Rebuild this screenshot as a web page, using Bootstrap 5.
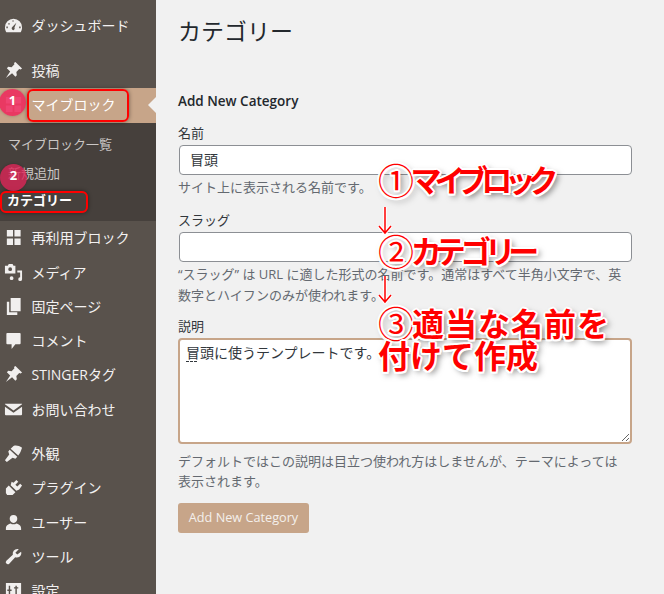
<!DOCTYPE html>
<html lang="ja">
<head>
<meta charset="utf-8">
<title>カテゴリー</title>
<link href="https://cdn.jsdelivr.net/npm/bootstrap@5.3.0/dist/css/bootstrap.min.css" rel="stylesheet">
<style>
html,body{height:594px;overflow:hidden}
body{background:#f1f1f1;font-family:"Open Sans","Noto Sans CJK JP",sans-serif;font-size:13px;color:#32373c;position:relative}
.side{width:156px;height:594px;background:#59524c;flex:none;overflow:hidden;padding-top:8px}
.mi{height:34.3px;display:flex;align-items:center;color:#f3f1f1;font-size:14px;text-decoration:none;padding-left:4px;position:relative}
.mi svg{width:19px;height:19px;margin-right:8.500px;flex:none;fill:#f1efee}
.mi span{white-space:nowrap}
.gap{height:11px}
.gap2{height:10px}
.mi.act{background:#c7a589;height:35px;color:#fff;padding-bottom:2px}
.mi.act:after{content:"";position:absolute;right:0;top:9px;border:8px solid transparent;border-right-color:#f1f1f1}
.sub{background:#46403c;height:98px;padding-top:9.500px}
.sub a{display:block;height:28.500px;line-height:25px;padding-left:8px;font-size:13px;color:#cbc7c5;text-decoration:none;white-space:nowrap}
.sub a.on{color:#fff;font-weight:700;padding-left:7px;height:22px;line-height:22px}
.main{padding:0 0 0 22px;width:476px;flex:none}
.ttl{font-size:23px;font-weight:400;color:#23282d;margin:17px 0 0;line-height:29px;height:29px}
.sec{font-size:13.500px;font-weight:600;margin:46px 0 0;line-height:18px;height:18px;color:#23282d}
.lbl{display:block;line-height:18px;margin:15px 0 3px 0;font-size:13px;color:#32373c}
.fc{margin-left:1px;width:453px;height:30px;border:1px solid #8c8f94;border-radius:4px;padding:0 10px 2px;font-size:14px;color:#32373c;box-shadow:none;background:#fff;min-height:0}
.hint{color:#646970;font-size:13px;line-height:21px;margin:0;width:454px}
.h1t{margin-top:2px}
.ta{margin-left:0;width:454px;height:106px;border:2px solid #c7a589;border-radius:4px;padding:3px 6px;font-size:14px;line-height:19px;color:#32373c;box-shadow:none;min-height:0}
.ta:focus{border-color:#c7a589;box-shadow:none}
.addb{background:#c7a589;border:0;color:#f4f0ec;font-size:12.700px;font-weight:400;height:30px;width:131px;padding:0;border-radius:3px;margin-top:12px}
.addb:hover{background:#c7a589;color:#f4f0ec}
.ov{position:absolute;pointer-events:none}
.rbox{border:2px solid #f00;border-radius:6px;box-shadow:0 0 4px rgba(0,0,0,.45)}
.num{width:27px;height:27px;border-radius:50%;color:#fff;font-size:13px;font-weight:700;display:flex;align-items:center;justify-content:center;padding-bottom:3px;box-shadow:0 0 3px rgba(0,0,0,.25)}
.n1{left:-1px;top:89px;background:rgba(238,38,92,.85)}
.n2{left:0;top:164px;background:rgba(220,36,86,.8)}
.anno{color:#f00;font-size:32px;font-weight:700;line-height:38px;white-space:nowrap;font-family:"Noto Sans CJK JP",sans-serif;
text-shadow:-2px 0 0 #fff,2px 0 0 #fff,0 -2px 0 #fff,0 2px 0 #fff,-1.5px -1.5px 0 #fff,1.5px 1.5px 0 #fff,-1.5px 1.5px 0 #fff,1.5px -1.5px 0 #fff,3px 3px 6px rgba(0,0,0,.6)}
.a1{font-feature-settings:"palt";font-size:31px;letter-spacing:-5.300px}
.a2{font-feature-settings:"palt";font-size:31px;letter-spacing:-4.500px}
.a3{letter-spacing:1px}
.circ{letter-spacing:0;font-size:36px;font-weight:400;font-feature-settings:normal;display:inline-block;width:34px;margin-right:0;text-align:center;vertical-align:top;line-height:38px}
.dots{left:186px;top:361px;width:11px;border-top:1px dashed #32373c}
</style>
</head>
<body>
<div class="d-flex">
<nav class="side">
<a class="mi" href="#"><svg viewBox="0 0 20 20"><path d="M10 3a9 9 0 0 0-9 9c0 2 .6 3.500 1.500 5h15c.9-1.500 1.500-3 1.500-5a9 9 0 0 0-9-9zM4 13H2.500v-2H4zm2-4H4.500V7.500H6zm4-3H9V4.500h1zm0 9a2 2 0 0 1-1-3.700L13 7l-2 5.200A2 2 0 0 1 10 15zm4-6h1.500V7.500H14zm3.500 4H16v-2h1.500z"/></svg><span>ダッシュボード</span></a>
<div class="gap"></div>
<a class="mi" href="#"><svg viewBox="0 0 20 20"><path d="M12 1l7 7-1.500 1-1.500-.5-3 3 .5 3.500-1.500 1.500-3.500-3.500L2 18l4.500-7L3 7.500 4.500 6l3.500.5 3-3L10.500 2z"/></svg><span>投稿</span></a>
<a class="mi act" href="#"><svg viewBox="0 0 20 20"><path d="M2 2h7v7H2zM11 2h7v7h-7zM2 11h7v7H2zM11 11h7v7h-7z"/></svg><span>マイブロック</span></a>
<div class="sub">
<a href="#">マイブロック一覧</a>
<a href="#">新規追加</a>
<a class="on" href="#">カテゴリー</a>
</div>
<a class="mi" href="#"><svg viewBox="0 0 20 20"><path d="M3 2h6.500v7H3zM11 2h6.500v7H11zM3 11h6.500v7H3zM11 11h6.500v7H11z"/></svg><span>再利用ブロック</span></a>
<a class="mi" href="#"><svg viewBox="0 0 20 20"><path d="M1 3h3l1-2h4l1 2h2v8H1zm5.500 1.500a2 2 0 1 0 0 4 2 2 0 0 0 0-4zM19 8v9a2 2 0 1 1-2-2V10h-3V8zM8 14a2 2 0 1 1 0 4 2 2 0 0 1 0-4z"/></svg><span>メディア</span></a>
<a class="mi" href="#"><svg viewBox="0 0 20 20"><path d="M7 1h10.500v14H7zM3 5h2.500v11H14v3H3z"/></svg><span>固定ページ</span></a>
<a class="mi" href="#"><svg viewBox="0 0 20 20"><path d="M3.500 2h13a1 1 0 0 1 1 1v10a1 1 0 0 1-1 1H12l-4 5v-5H3.500a1 1 0 0 1-1-1V3a1 1 0 0 1 1-1z"/></svg><span>コメント</span></a>
<a class="mi" href="#"><svg viewBox="0 0 20 20"><path d="M12 1l7 7-1.500 1-1.500-.5-3 3 .5 3.500-1.500 1.500-3.500-3.500L2 18l4.500-7L3 7.500 4.500 6l3.500.5 3-3L10.500 2z"/></svg><span>STINGERタグ</span></a>
<a class="mi" href="#"><svg viewBox="0 0 20 20"><path d="M1 4h18v.5L10 11 1 4.500zm0 3l9 6.500L19 7v8a1 1 0 0 1-1 1H2a1 1 0 0 1-1-1z"/></svg><span>お問い合わせ</span></a>
<div class="gap2"></div>
<a class="mi" href="#"><svg viewBox="0 0 20 20"><path d="M19 4c-3-2-6-3-9-2L7 5l8 7c2-2 3-5 4-8zM6 6L4.500 8l1 3L1 17l2 2 6-4.500 3 1L14 13.500z"/></svg><span>外観</span></a>
<a class="mi" href="#"><svg viewBox="0 0 20 20"><path d="M13 2l2 2-3 3 2 2 3-3 2 2-3 4-3 1.500-6-6L8 4l2 1zM5 8l7 7-3 3H3v-1l-1-1v-5z"/></svg><span>プラグイン</span></a>
<a class="mi" href="#"><svg viewBox="0 0 20 20"><path d="M10 2a4 4 0 0 1 4 4c0 2-1.500 4.500-4 4.500S6 8 6 6a4 4 0 0 1 4-4zM2 16c0-3 3-4.500 5-5 1.500 1.200 4.500 1.200 6 0 2 .5 5 2 5 5v2H2z"/></svg><span>ユーザー</span></a>
<a class="mi" href="#"><svg viewBox="0 0 20 20"><path d="M18 5c.8 2.500-.5 6-4.500 6-.6 0-1.200-.1-1.700-.3L5.500 17.500a2.100 2.100 0 0 1-3-3l6.800-6.300A5 5 0 0 1 14 2c.6 0 1 .1 1.500.3L12 6l2 2z"/></svg><span>ツール</span></a>
<a class="mi" href="#"><svg viewBox="0 0 20 20"><path d="M2 2h16v16H2zm3 3v4H3.500v1.500H5V15h1.500v-4.500H8V9H6.500V5zm7 0v1.500h-1.500V8H12v7h1.500V8H15V6.500h-1.500V5z"/></svg><span>設定</span></a>
</nav>
<main class="main">
<h1 class="ttl">カテゴリー</h1>
<h2 class="sec">Add New Category</h2>
<form>
<label class="lbl" style="margin-top:14px">名前</label>
<input class="form-control fc" value="冒頭">
<p class="hint h1t">サイト上に表示される名前です。</p>
<label class="lbl" style="margin-top:13px">スラッグ</label>
<input class="form-control fc">
<p class="hint h1t">“スラッグ” は URL に適した形式の名前です。通常はすべて半角小文字で、英数字とハイフンのみが使われます。</p>
<label class="lbl" style="margin-top:11px">説明</label>
<textarea class="form-control ta">冒頭に使うテンプレートです。</textarea>
<p class="hint" style="margin-top:7px;line-height:20px;width:446px">デフォルトではこの説明は目立つ使われ方はしませんが、テーマによっては表示されます。</p>
<button type="button" class="btn addb">Add New Category</button>
</form>
</main>
</div>

<div class="ov rbox" style="left:27px;top:89px;width:102px;height:33px"></div>
<div class="ov rbox" style="left:0;top:191px;width:88px;height:22px"></div>
<div class="ov num n1">1</div>
<div class="ov num n2">2</div>
<div class="ov dots"></div>

<div class="ov anno a1" style="left:378px;top:160px"><span class="circ">①</span>マイブロック</div>
<div class="ov anno a2" style="left:378px;top:231px"><span class="circ">②</span>カテゴリー</div>
<div class="ov anno a3" style="left:378px;top:303px"><span class="circ">③</span>適当な名前を</div>
<div class="ov anno" style="left:378px;top:335px">付けて作成</div>

<svg class="ov" style="left:376px;top:205px" width="18" height="32" viewBox="0 0 18 32"><path d="M9 2v26M3 21l6 7 6-7" fill="none" stroke="#fff" stroke-width="3.500"/><path d="M9 2v26M3 21l6 7 6-7" fill="none" stroke="#f00" stroke-width="1.500"/></svg>
<svg class="ov" style="left:376px;top:274px" width="18" height="32" viewBox="0 0 18 32"><path d="M9 2v26M3 21l6 7 6-7" fill="none" stroke="#fff" stroke-width="3.500"/><path d="M9 2v26M3 21l6 7 6-7" fill="none" stroke="#f00" stroke-width="1.500"/></svg>

<script src="https://cdn.jsdelivr.net/npm/bootstrap@5.3.0/dist/js/bootstrap.bundle.min.js"></script>
</body>
</html>
